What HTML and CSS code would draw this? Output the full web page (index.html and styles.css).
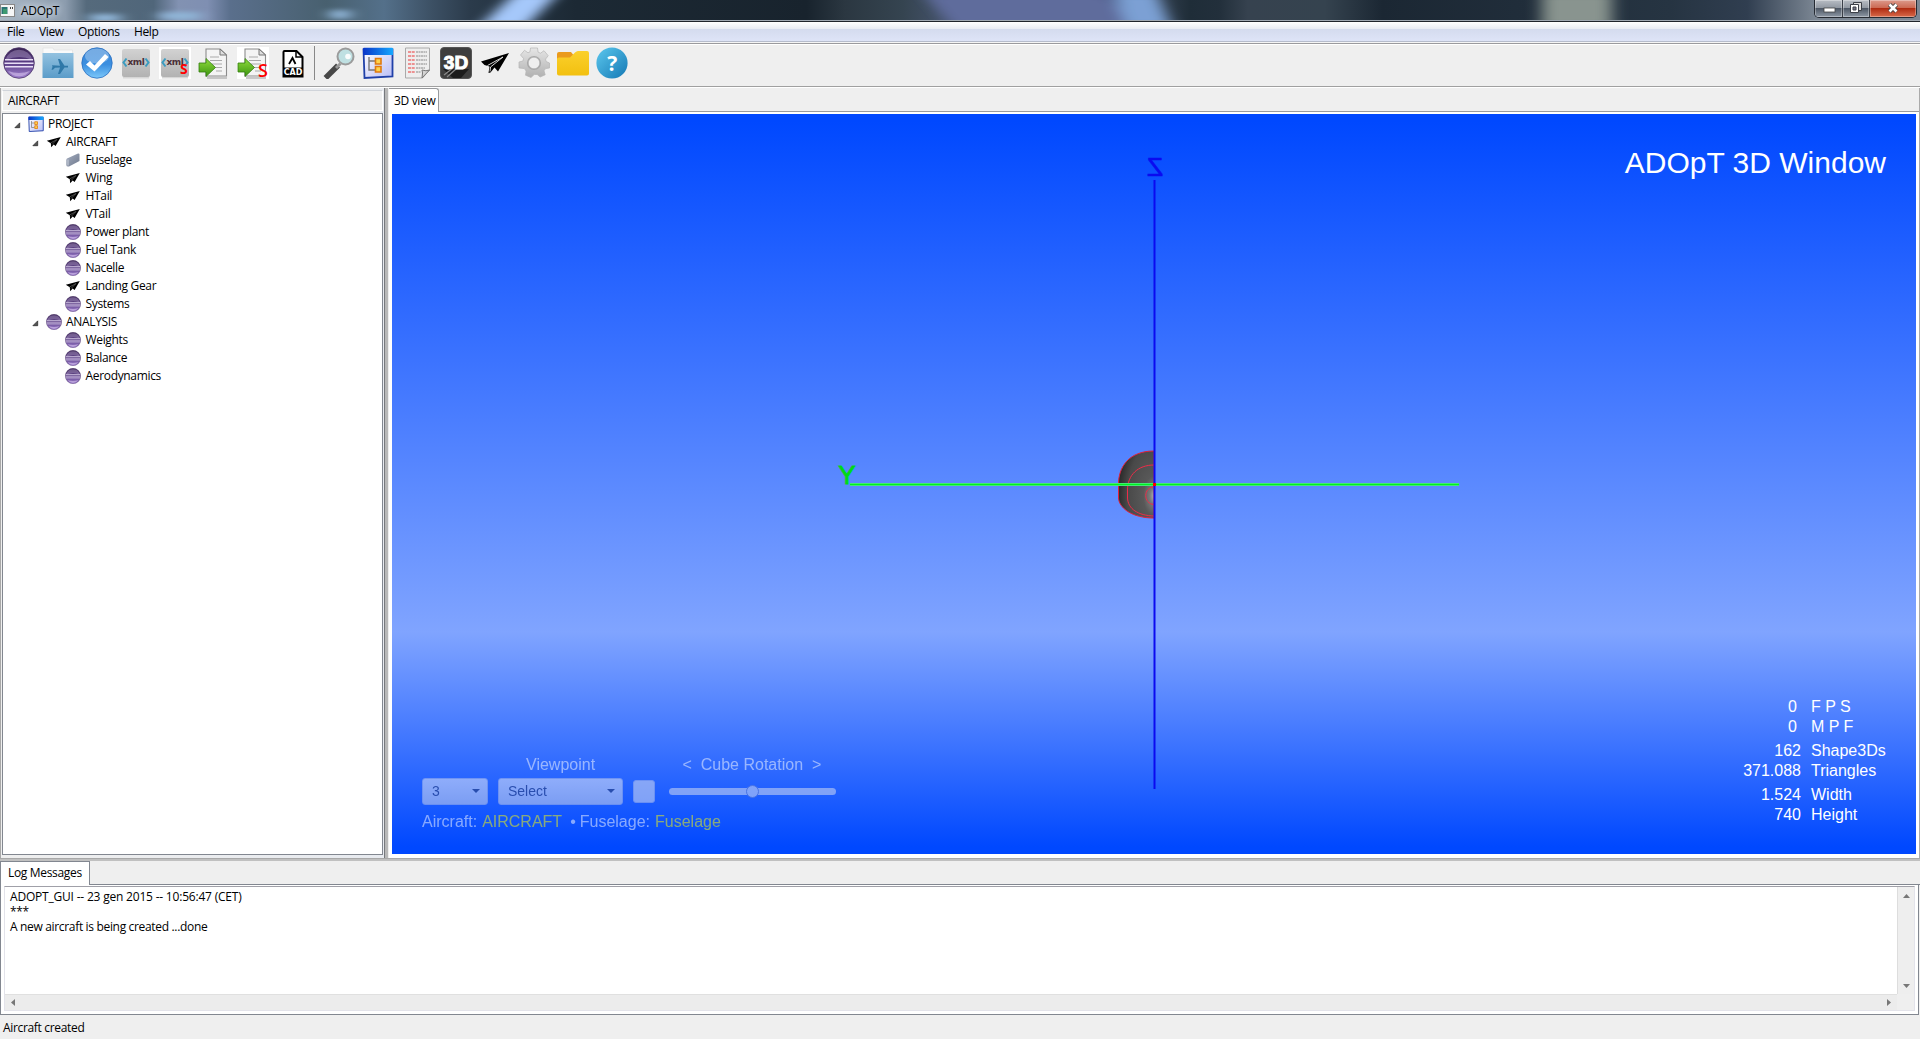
FILE: index.html
```
<!DOCTYPE html>
<html lang="en">
<head>
<meta charset="utf-8">
<title>ADOpT</title>
<link rel="stylesheet" href="styles.css">
</head>
<body>
<svg class="defs" width="0" height="0" aria-hidden="true">
  <defs>
    <linearGradient id="purple" x1="0" y1="0" x2="0" y2="1"><stop offset="0" stop-color="#3a2454"/><stop offset=".45" stop-color="#563a80"/><stop offset="1" stop-color="#a183d2"/></linearGradient>
    <linearGradient id="folderBlue" x1="0" y1="0" x2="0" y2="1"><stop offset="0" stop-color="#93c2e0"/><stop offset="1" stop-color="#5b9cc9"/></linearGradient>
    <linearGradient id="checkBlue" x1="0" y1="0" x2="0" y2="1"><stop offset="0" stop-color="#3a86d6"/><stop offset=".55" stop-color="#3b8fe0"/><stop offset="1" stop-color="#7cc8fa"/></linearGradient>
    <linearGradient id="tile" x1="0" y1="0" x2="0" y2="1"><stop offset="0" stop-color="#d2d2d2"/><stop offset="1" stop-color="#b2b2b2"/></linearGradient>
    <linearGradient id="green" x1="0" y1="0" x2="0" y2="1"><stop offset="0" stop-color="#8fdc3c"/><stop offset="1" stop-color="#3c9410"/></linearGradient>
    <linearGradient id="win" x1="0" y1="0" x2="1" y2="1"><stop offset="0" stop-color="#fff"/><stop offset="1" stop-color="#b9bdf5"/></linearGradient>
    <linearGradient id="winBar" x1="0" y1="0" x2="1" y2="0"><stop offset="0" stop-color="#0a35c8"/><stop offset="1" stop-color="#16a8ff"/></linearGradient>
    <linearGradient id="gear" x1="0" y1="0" x2="0" y2="1"><stop offset="0" stop-color="#e6e6e6"/><stop offset="1" stop-color="#b0b0b0"/></linearGradient>
    <linearGradient id="yellow" x1="0" y1="0" x2="0" y2="1"><stop offset="0" stop-color="#fbd02c"/><stop offset="1" stop-color="#f2c010"/></linearGradient>
    <linearGradient id="help" x1="0" y1="0" x2="1" y2="1"><stop offset="0" stop-color="#5cc8ee"/><stop offset="1" stop-color="#1478b4"/></linearGradient>
    <linearGradient id="slab" x1="0" y1="0" x2="1" y2="1"><stop offset="0" stop-color="#a5aec0"/><stop offset="1" stop-color="#6e788c"/></linearGradient>
    <radialGradient id="hull" cx="1" cy=".67" r="1"><stop offset="0" stop-color="#b0b0b0"/><stop offset=".12" stop-color="#7a7a7a"/><stop offset=".3" stop-color="#585858"/><stop offset=".75" stop-color="#494949"/><stop offset="1" stop-color="#2c2c2c"/></radialGradient>
    <symbol id="i-ball" viewBox="0 0 32 32">
      <circle cx="16" cy="16" r="15.3" fill="url(#purple)" stroke="#4b3568" stroke-width=".8"/>
      <path d="M2.5 13a14 14 0 0 1 27 0q-13-6-27 0z" fill="#cdbce6" opacity=".35"/>
      <path d="M2 12.8h28M1.5 16.3h29M2 19.8h28" stroke="#e8def5" stroke-width="1.5"/>
      <path d="M5 24q11 4 22 0a14 14 0 0 1-22 0z" fill="#e3d2f5" opacity=".5"/>
    </symbol>
    <symbol id="i-plane" viewBox="0 0 32 32">
      <path d="M2 14.5L30 6 19 24.5 15.5 20.5 11.5 25.5 9.5 26 10.5 19.5 5.5 18z" fill="#000"/>
      <path d="M8.5 18.5L24 10 11.5 20 11 24.5" stroke="#eee" stroke-width=".9" fill="none"/>
    </symbol>
    <symbol id="i-plane-small" viewBox="0 0 16 16">
      <path d="M.8 6.700L14.800 3 9.600 12 7.700 10.600 5.200 13.200 4.800 9.300z" fill="#000"/>
      <path d="M4.500 9L11 5.500 6 10.500" stroke="#888" stroke-width=".5" fill="none"/>
    </symbol>
    <symbol id="i-tree" viewBox="0 0 32 32">
      <path d="M1.500 2.500h29v27l-28 1.500z" fill="url(#win)" stroke="#2040a8" stroke-width="1.800"/>
      <path d="M1 1.800q0-1 1-1h28q1 0 1 1V8H1z" fill="url(#winBar)"/>
      <path d="M7 10v13h6M7 14h6" stroke="#777" stroke-width="1.400" fill="none"/>
      <path d="M13.500 11.500h5.500v5.500h-5.500zM13.500 19.500h5.500v5.500h-5.500z" fill="#ffd24a" stroke="#e07a10" stroke-width="1.600"/>
    </symbol>
    <symbol id="i-expand" viewBox="0 0 8 8"><path d="M6.500 1v5.500H1z" fill="#555" stroke="#222" stroke-width=".8"/></symbol>
    <symbol id="i-page" viewBox="0 0 32 32">
      <path d="M9 31h20" stroke="#bbb" stroke-width="1.600"/>
      <path d="M8 2h14l6.500 6v21H8z" fill="#f4f4f4" stroke="#8c8c8c" stroke-width="1.100"/>
      <path d="M22 2v6h6.500z" fill="#ddd" stroke="#777"/>
      <path d="M12 10h9M12 13.500h12M14 17h10M16 20.500h8M18 24h6" stroke="#aaa" stroke-width="1.200"/>
      <path d="M1 16h7v-4.500l9.500 9-9.500 9V25H1z" fill="url(#green)" stroke="#327d10" stroke-width=".8"/>
    </symbol>
    <symbol id="i-xml" viewBox="0 0 32 32">
      <path d="M3 30.500h26" stroke="#d6d6d6" stroke-width="2"/>
      <rect x="2" y="2" width="28" height="28" rx="2" fill="url(#tile)"/>
      <path d="M6.500 11.500L3.500 15.500l3 4M25.500 11.500l3 4-3 4" stroke="#3b9cc0" stroke-width="2" fill="none"/>
      <text x="16" y="17.500" text-anchor="middle" class="t-xml">xml</text>
    </symbol>
    <symbol id="i-magnifier" viewBox="0 0 32 32">
      <path d="M2.500 31L15 18.500" stroke="#484848" stroke-width="5.500"/>
      <path d="M13 21l4.500-4.500" stroke="#999" stroke-width="3"/>
      <circle cx="22.500" cy="9.500" r="8" fill="#bfe0e2" stroke="#9b9b9b" stroke-width="2"/>
      <circle cx="25" cy="9.500" r="2.800" fill="#fff" opacity=".9"/>
    </symbol>
  </defs>
</svg>

<header class="titlebar">
  <svg class="aero" viewBox="0 0 1920 20" preserveAspectRatio="none">
    <defs>
      <filter id="soft" x="-20%" y="-100%" width="140%" height="300%"><feGaussianBlur stdDeviation="8 2"/></filter>
      <linearGradient id="sky" gradientUnits="userSpaceOnUse" x1="0" y1="0" x2="1920" y2="0">
        <stop offset="0" stop-color="#a9b7c4"/><stop offset=".034" stop-color="#8c9cae"/><stop offset=".045" stop-color="#556a7c"/><stop offset=".08" stop-color="#50667a"/>
        <stop offset=".093" stop-color="#8292b2"/><stop offset=".108" stop-color="#7f8fb2"/><stop offset=".12" stop-color="#5a6f8c"/><stop offset=".17" stop-color="#48606f"/>
        <stop offset=".2" stop-color="#54708a"/><stop offset=".225" stop-color="#3c5064"/><stop offset=".245" stop-color="#2b3b4b"/><stop offset=".3" stop-color="#1c2934"/>
        <stop offset=".42" stop-color="#18232d"/><stop offset=".44" stop-color="#2b3741"/><stop offset=".47" stop-color="#354450"/><stop offset=".49" stop-color="#435168"/>
        <stop offset=".58" stop-color="#414d74"/><stop offset=".6" stop-color="#364353"/><stop offset=".62" stop-color="#1f2d38"/><stop offset=".635" stop-color="#222f3b"/><stop offset=".65" stop-color="#36424f"/>
        <stop offset=".69" stop-color="#35434f"/><stop offset=".72" stop-color="#1b2733"/><stop offset=".87" stop-color="#263442"/><stop offset=".91" stop-color="#303e50"/><stop offset=".945" stop-color="#7a8592"/><stop offset="1" stop-color="#7c8794"/>
      </linearGradient>
    </defs>
    <rect width="1920" height="20" fill="url(#sky)"/>
    <g filter="url(#soft)">
      <path d="M512 -4h44l-28 28h-46z" fill="#a5c8fa"/>
      <path d="M926 -4h180l30 28H950z" fill="#5e6c9c"/>
      <path d="M1114 -4h44l12 28h-44z" fill="#7ba0d4"/>
      <path d="M1542 -4h70v28h-70z" fill="#89948f"/>
      <path d="M90 14h30v8H90zM160 12h40v8h-40zM330 10h20v9h-20z" fill="#8fb4d6"/>
    </g>
  </svg>
  <svg class="app-icon" viewBox="0 0 16 14"><rect x=".5" y=".5" width="14" height="12" fill="#f6f6f6" stroke="#888"/><path d="M1.500 3h6v7h-6z" fill="#2a7474"/><path d="M3 5h4v5H3z" fill="#3e9a70"/><path d="M10 3h1v2h-1zM12 3h1v2h-1z" fill="#444"/></svg>
  <span class="app-name">ADOpT</span>
  <div class="window-buttons">
    <span class="wb wb-min"><svg width="14" height="18"><rect x="2" y="8" width="11" height="4" fill="#fff" stroke="#444" stroke-width=".8"/></svg></span>
    <span class="wb wb-max"><svg width="14" height="18"><path d="M4.500 2.500h8v8h-8z" fill="#ddd" stroke="#3c4048"/><path d="M1.500 4.500h8v8h-8z" fill="#fff" stroke="#3c4048"/><path d="M4 7h3v3H4z" fill="#778" stroke="#3c4048"/></svg></span>
    <span class="wb wb-close"><svg width="16" height="18"><path d="M4.500 4.500l7 7M11.500 4.500l-7 7" stroke="#444" stroke-width="4.400"/><path d="M4.500 4.500l7 7M11.500 4.500l-7 7" stroke="#fff" stroke-width="2.600"/></svg></span>
  </div>
</header>

<nav class="menubar"><span class="m-file">File</span><span class="m-view">View</span><span class="m-options">Options</span><span class="m-help">Help</span></nav>

<div class="toolbar">
  <span class="tool"><svg><use href="#i-ball"/></svg></span>
  <span class="tool"><svg viewBox="0 0 32 32"><path d="M1 1h10l1 2h18.500v5H1z" fill="#fafafa" stroke="#ddd" stroke-width=".6"/><path d="M.5 6h31v25H.5z" fill="url(#folderBlue)"/><path d="M10 18.300l8 .4L16 12h2l4.500 6.800H26l0 1.700h-3.500L18 27h-2l2-6.500-5 .2-2 2H9.500l1-3-1-3z" fill="#2f78a8"/></svg></span>
  <span class="tool"><svg viewBox="0 0 32 32"><circle cx="16" cy="16" r="15.200" fill="url(#checkBlue)" stroke="#2a6fc0" stroke-width=".8"/><ellipse cx="16" cy="9" rx="12" ry="7.500" fill="#fff" opacity=".3"/><path d="M5 17.500l4-3.500 4.500 4.500L24 7l3.500 3L13.500 24.500z" fill="#fff"/></svg></span>
  <span class="tool"><svg><use href="#i-xml"/></svg></span>
  <span class="tool white"><svg viewBox="0 0 32 32"><use href="#i-xml" width="32" height="32"/><text x="21" y="27" class="t-s">S</text></svg></span>
  <span class="tool"><svg><use href="#i-page"/></svg></span>
  <span class="tool white"><svg viewBox="0 0 32 32"><use href="#i-page" width="32" height="32"/><text x="21" y="30" class="t-s big">S</text></svg></span>
  <span class="tool"><svg viewBox="0 0 32 32"><path d="M8.500 4h12l6 6v19.500h-19V5q0-1 1-1z" fill="#fff" stroke="#000" stroke-width="2"/><path d="M20 3.500V10h7" stroke="#000" stroke-width="1.500" fill="none"/><path d="M7 20.500h20v9H7z"/><path d="M13 17l3.500-6 3 6" stroke="#000" stroke-width="1.800" fill="none"/><text x="17" y="28" text-anchor="middle" class="t-cad">CAD</text></svg></span>
  <span class="separator"></span>
  <span class="tool"><svg><use href="#i-magnifier"/></svg></span>
  <span class="tool"><svg><use href="#i-tree"/></svg></span>
  <span class="tool"><svg viewBox="0 0 32 32"><path d="M4.500 1h24v22l-7 8h-17z" fill="#eee" stroke="#aaa"/><path d="M7 5h7M7 9h7M7 13h7M7 17h7M7 21h7M7 25h7" stroke="#ec7474" stroke-width="1.500" stroke-dasharray="3 .7"/><path d="M15 5h11M15 9h11M15 13h11M15 17h11M15 21h9M15 25h5" stroke="#888" stroke-width="1.100" stroke-dasharray="2 .5"/><path d="M21 31q1-6 0-8 4 1.500 7.500 0z" fill="#d5d5d5" stroke="#777"/></svg></span>
  <span class="tool"><svg viewBox="0 0 32 32"><rect x=".5" y=".5" width="31" height="31" rx="3.500" fill="#3e3e3e" stroke="#555"/><path d="M3 22l10 9h8l8-9z" fill="#1c1c1c"/><path d="M4 28l9-7M7 30l9-8" stroke="#888" stroke-width="1.300"/><text x="16" y="22" text-anchor="middle" class="t-3d">3D</text></svg></span>
  <span class="tool"><svg><use href="#i-plane"/></svg></span>
  <span class="tool"><svg viewBox="0 0 32 32"><path fill-rule="evenodd" d="M12.500 1h7l.6 4.200 2.500 1 3.400-2.500 4.200 5-2.600 3.400.5 2.400L31.500 16v5l-4 .6-1.500 2.200 1.200 4-5 2.200-3-2.500h-3L13 30.500l-5.500-2.300.6-4.200-1.700-2.400L1 21v-6l4-1 .5-2.600L2.500 8l4-4.700 3.500 2.500 2-1zM16 10.300a5.700 5.700 0 1 0 .01 0z" fill="url(#gear)" stroke="#b5b5b5" stroke-width=".7"/><circle cx="16" cy="16" r="6.500" fill="none" stroke="#a8a8a8" stroke-width="1.200"/></svg></span>
  <span class="tool"><svg viewBox="0 0 32 32"><path d="M0 14V7q0-2 2-2h12l4 5z" fill="#ea9a1c"/><path d="M0 12q0-1.600 2-1.600h11L18 5.500q1.500-1.500 3-1.500h9q2 0 2 2v20.500q0 2-2 2H2q-2 0-2-2z" fill="url(#yellow)"/></svg></span>
  <span class="tool"><svg viewBox="0 0 32 32"><circle cx="16" cy="16" r="15.600" fill="url(#help)"/><text x="16" y="23.500" text-anchor="middle" class="t-q">?</text></svg></span>
</div>

<main class="workspace">
  <section class="explorer">
    <h2 class="explorer-title">AIRCRAFT</h2>
    <ul class="tree">
      <li class="l0"><svg class="tw"><use href="#i-expand"/></svg><svg class="ic"><use href="#i-tree"/></svg><span>PROJECT</span></li>
      <li class="l1"><svg class="tw"><use href="#i-expand"/></svg><svg class="ic"><use href="#i-plane-small"/></svg><span>AIRCRAFT</span></li>
      <li class="l2"><svg class="ic" viewBox="0 0 16 16"><path d="M2 6.500L13 1.500q1.500-.3 1.500 1V9L4 14.500q-2.500.5-2.700-1.500V8q0-1 .7-1.500z" fill="url(#slab)"/><path d="M3 7.500v6" stroke="#ccd2de"/></svg><span>Fuselage</span></li>
      <li class="l2"><svg class="ic"><use href="#i-plane-small"/></svg><span>Wing</span></li>
      <li class="l2"><svg class="ic"><use href="#i-plane-small"/></svg><span>HTail</span></li>
      <li class="l2"><svg class="ic"><use href="#i-plane-small"/></svg><span>VTail</span></li>
      <li class="l2"><svg class="ic"><use href="#i-ball"/></svg><span>Power plant</span></li>
      <li class="l2"><svg class="ic"><use href="#i-ball"/></svg><span>Fuel Tank</span></li>
      <li class="l2"><svg class="ic"><use href="#i-ball"/></svg><span>Nacelle</span></li>
      <li class="l2"><svg class="ic"><use href="#i-plane-small"/></svg><span>Landing Gear</span></li>
      <li class="l2"><svg class="ic"><use href="#i-ball"/></svg><span>Systems</span></li>
      <li class="l1"><svg class="tw"><use href="#i-expand"/></svg><svg class="ic"><use href="#i-ball"/></svg><span>ANALYSIS</span></li>
      <li class="l2"><svg class="ic"><use href="#i-ball"/></svg><span>Weights</span></li>
      <li class="l2"><svg class="ic"><use href="#i-ball"/></svg><span>Balance</span></li>
      <li class="l2"><svg class="ic"><use href="#i-ball"/></svg><span>Aerodynamics</span></li>
    </ul>
  </section>
  <div class="sash"></div>
  <section class="viewer">
    <div class="tabs"><span class="tab">3D view</span></div>
    <div class="canvas">
      <svg class="scene" viewBox="392 114 1524 740">
        <path d="M1154 451C1128 451 1118.500 468 1118.500 484v14C1119 508 1132 518 1154 518z" fill="url(#hull)" stroke="#e0203a" stroke-width="1"/>
        <path d="M1154 465C1138 465 1127.500 475 1127.500 490v8C1128 509 1138 515.500 1154 516M1154 487C1143 487 1143 504 1154 504.500" fill="none" stroke="#ee2c48" stroke-width="1"/>
        <path d="M850 484.500H1459" stroke="#58e890" stroke-width="3"/>
        <path d="M850 484.500H1459" stroke="#00f020" stroke-width="1.600"/>
        <path d="M1154.500 180V789" stroke="#0a0af0" stroke-width="2"/>
        <rect x="1153" y="483" width="3" height="3" fill="#f00"/>
        <text x="-1155" y="176" text-anchor="middle" class="axis-z" transform="scale(-1 1)">Z</text>
        <text x="847" y="483.500" text-anchor="middle" class="axis-y">Y</text>
      </svg>
      <h1 class="scene-title">ADOpT 3D Window</h1>
      <div class="controls">
        <div class="control-row captions"><span class="cap-view">Viewpoint</span><span class="cap-cube">&lt;&nbsp; Cube Rotation &nbsp;&gt;</span></div>
        <div class="control-row">
          <span class="combo combo-num">3</span><span class="combo combo-view">Select</span><span class="check"></span><span class="slider"><i></i></span>
        </div>
        <div class="control-row path"><span>Aircraft:</span><b>AIRCRAFT</b><span class="dot">•</span><span>Fuselage:</span><b>Fuselage</b></div>
      </div>
      <dl class="stats">
        <dt class="rate">0</dt><dd>F P S</dd><dt class="rate">0</dt><dd>M P F</dd>
        <dt class="gap">162</dt><dd class="gap">Shape3Ds</dd><dt>371.088</dt><dd>Triangles</dd>
        <dt class="gap">1.524</dt><dd class="gap">Width</dd><dt>740</dt><dd>Height</dd>
      </dl>
    </div>
  </section>
</main>

<div class="hsash"></div>

<section class="log">
  <div class="tabs"><span class="tab log-tab">Log Messages</span></div>
  <div class="log-frame">
    <div class="log-box">
      <div class="log-text"><p class="stamp">ADOPT_GUI -- 23 gen 2015 -- 10:56:47 (CET)</p><p class="stars">***</p><p>A new aircraft is being created ...done</p></div>
      <div class="vscroll"><svg width="7" height="4"><path d="M0 4h7L3.500 0z"/></svg><svg width="7" height="4"><path d="M0 0h7L3.500 4z"/></svg></div>
      <div class="hscroll"><svg width="4" height="7"><path d="M4 0v7L0 3.500z"/></svg><svg width="4" height="7"><path d="M0 0v7l4-3.500z"/></svg></div>
    </div>
  </div>
</section>
<footer class="status">Aircraft created</footer>
</body>
</html>
```
FILE: styles.css
```
* { box-sizing: border-box; }
body {
  margin: 0; width: 1920px; height: 1039px; overflow: hidden;
  display: flex; flex-direction: column;
  background: #efefef; color: #000;
  font: 12px/18px "Open Sans", "Noto Sans", sans-serif; letter-spacing: -.33px;
}
.defs { position: absolute; }
svg { display: block; flex: none; }
h1, h2, p, ul, dl, dd { margin: 0; padding: 0; font-weight: 400; }

.titlebar { position: relative; height: 22px; flex: none; display: flex; border-bottom: 1px solid #20242c; box-shadow: inset 0 -1px #a0a8b2; }
.aero { position: absolute; left: 0; top: 0; width: 1920px; height: 20px; }
.app-icon { position: relative; width: 16px; height: 14px; margin: 4px 0 0; }
.app-name { position: relative; margin-left: 5px; line-height: 21px; text-shadow: 0 0 6px #e8f0f8, 0 0 8px #dce6f0; }
.window-buttons { position: relative; margin: 0 3px 0 auto; width: 103px; height: 18px; display: flex; border: 1px solid #252a32; border-top: 0; border-radius: 0 0 5px 5px; overflow: hidden; }
.wb { display: flex; justify-content: center; border-right: 1px solid #3a3f48; background: linear-gradient(#b8bdc4, #9299a3 45%, #4e5866 50%, #8e98a5); box-shadow: inset 0 0 0 1px #ffffff55; }
.wb-min { width: 28px; } .wb-max { width: 27px; }
.wb-close { flex: 1; border: 0; background: linear-gradient(#dc9a8c, #cc6a54 45%, #b02c12 50%, #d86a4a); }

.menubar { height: 22px; flex: none; display: flex; padding-left: 7px; line-height: 20px; letter-spacing: -.4px;
  background: linear-gradient(#fff, #e8ebf4 7px, #d4dbee 7px, #dee4f7 19px, #b6bccc 19px, #b6bccc 20px, #f5f5f5 20px, #f5f5f5 21px, #9a9a9e 21px); }
.m-file { width: 32px; } .m-view { width: 39px; } .m-options { width: 56px; }

.toolbar { height: 43px; flex: none; display: flex; border-top: 1px solid #fff; border-bottom: 1px solid #a0a0a0; }
.tool { width: 39px; display: flex; align-items: center; justify-content: center; padding: 0 1px 6px 0; }
.tool svg { width: 32px; height: 32px; overflow: visible; }
.white svg { background: #fff; }
.separator { width: 8px; height: 34px; margin-top: 1px; border-left: 1px solid #888; margin-left: 2px; margin-right: -2px; }
.t-xml { font: 700 9px "DejaVu Sans", sans-serif; letter-spacing: -.4px; fill: #4a3038; }
.t-s { font: 700 14px "Open Sans", sans-serif; fill: #f00; }
.t-s.big { font-size: 18px; font-weight: 600; }
.t-cad { font: 700 8px "DejaVu Sans", sans-serif; fill: #fff; letter-spacing: 0; }
.t-3d { font: 700 19px "Liberation Sans", sans-serif; fill: #fff; stroke: #fff; letter-spacing: 0; }
.t-q { font: 700 21px "Open Sans", sans-serif; fill: #fff; }

.workspace { height: 771px; flex: none; display: flex; border-top: 1px solid #fff; }
.explorer { width: 384px; padding: 2px 0 0 2px; border-left: 1px solid #a8a8a8; display: flex; flex-direction: column; background: linear-gradient(90deg, #efefef, #e8ebf0); }
.explorer-title { height: 21px; margin: 0 1px 2px -1px; padding-left: 5px; font-size: 12px; line-height: 19px; background: #efefef; border: 1px solid #fff; border-top-color: #d0d4da; }
.tree { list-style: none; height: 742px; background: #fff; border: 1px solid #828790; padding-top: 1px; margin: 0 1px 0 -1px; }
.tree li { display: flex; align-items: center; height: 18.03px; }
.ic { width: 16px; height: 16px; margin: 0 4.500px 0 .5px; }
.tw { width: 7px; height: 7px; margin: 3px 6px 0 0; }
.l0 { padding-left: 11px; } .l1 { padding-left: 29px; } .l2 { padding-left: 61.5px; }
.sash { width: 5px; background: linear-gradient(90deg, #77797d 0 1px, #b8b8b8 1px 4px, #eee 4px); }

.viewer { flex: 1; display: flex; flex-direction: column; background: #fff; border-right: 1px solid #aaa; }
.tabs { display: flex; background: #efefef; border-bottom: 1px solid #989a9e; flex: none; }
.viewer .tabs { height: 24px; }
.tab { height: 24px; background: #fff; border: 1px solid #989a9e; border-left: 0; border-bottom: 0; border-radius: 0 3px 0 0; padding: 0 3px 0 5px; line-height: 24px; width: 50px; white-space: nowrap; }
.canvas { position: relative; margin: 2px 3px 0 3px; height: 740px; overflow: hidden; background: linear-gradient(#0048ff 1%, #80a4ff 70%, #0048ff 99%); font-family: "Liberation Sans", Arial, sans-serif; font-size: 16px; line-height: 20px; letter-spacing: 0; color: #fff; }
.scene { position: absolute; left: 0; top: 0; width: 1524px; height: 740px; }
.axis-z { font: 26px "Liberation Sans", sans-serif; fill: #0a0af0; stroke: #0a0af0; stroke-width: .7; }
.axis-y { font: 26px "Liberation Sans", sans-serif; fill: #00d818; stroke: #00d818; stroke-width: 1; }
.scene-title { position: absolute; right: 30px; top: 32px; font-size: 30px; line-height: 34px; white-space: nowrap; }
.controls { position: absolute; left: 30px; top: 641px; opacity: .5; }
.control-row { display: flex; align-items: center; white-space: nowrap; }
.captions { height: 20px; }
.cap-view { margin-left: 104px; width: 156.5px; }
.control-row:nth-child(2) { height: 31px; margin-top: 1px; }
.combo { position: relative; height: 27px; border: 1px solid #b8c4e8; border-radius: 3px; background: linear-gradient(#f4f4f8, #dcdfe8); color: #303c60; font-size: 14px; line-height: 25px; padding-left: 9px; margin-right: 10px; }
.combo::after { content: ""; position: absolute; right: 7px; top: 10px; border: 4px solid transparent; border-top-color: #303c60; border-bottom: 0; }
.combo-num { width: 66px; } .combo-view { width: 125px; }
.check { width: 22px; height: 23px; border: 1px solid #b8c4e8; border-radius: 3px; background: #e6e8f0; margin-right: 14px; }
.slider { width: 167px; height: 7px; border-radius: 4px; background: #e0e4f0; display: flex; justify-content: center; align-items: center; }
.slider i { width: 13px; height: 13px; border-radius: 50%; background: #dfe5f4; border: 1px solid #6f86c8; }
.path { height: 20px; margin-top: 5px; }
.path b { font-weight: 400; color: #ffff00; margin-left: 5px; }
.dot { margin: 0 4px 0 8px; }
.stats { position: absolute; left: 1340px; top: 583px; display: grid; grid-template-columns: 69px auto; column-gap: 10px; }
.stats dt { text-align: right; }
.stats .rate { padding-right: 4px; }
.gap { margin-top: 4px; }

.hsash { height: 3px; flex: none; background: #c0c0c0; border-top: 1px solid #a8a8a8; }
.log { height: 154px; flex: none; display: flex; flex-direction: column; border-left: 1px solid #828790; }
.log .tabs { height: 24px; border-color: #828790; }
.log-tab { width: 89px; border-color: #828790; padding-left: 7px; border-radius: 0; line-height: 21px; }
.log-frame { flex: 1; background: #fff; border: solid #828790; border-width: 0 1px 1px 0; padding: 1px 3px 3px 3px; margin-right: 1px; }
.log-box { height: 100%; display: grid; grid-template: 1fr 16px / 1fr 17px; border: 1px solid #e3e3ea; border-top-color: #a0a0a8; background: #efefef; }
.log-text { background: #fff; padding: 1px 0 0 5px; line-height: 17px; }
.log-text .stamp { letter-spacing: -.2px; }
.log-text .stars { line-height: 13px; }
.log svg { fill: #777; }
.vscroll { display: flex; flex-direction: column; justify-content: space-between; align-items: center; padding: 7px 0 6px; background: #eee; border-left: 1px solid #ddd; }
.hscroll { display: flex; justify-content: space-between; align-items: center; padding: 0 6px; background: #ececec; border-top: 1px solid #e0e0e0; }
.status { height: 24px; flex: none; padding-left: 3px; line-height: 26px; }
```
